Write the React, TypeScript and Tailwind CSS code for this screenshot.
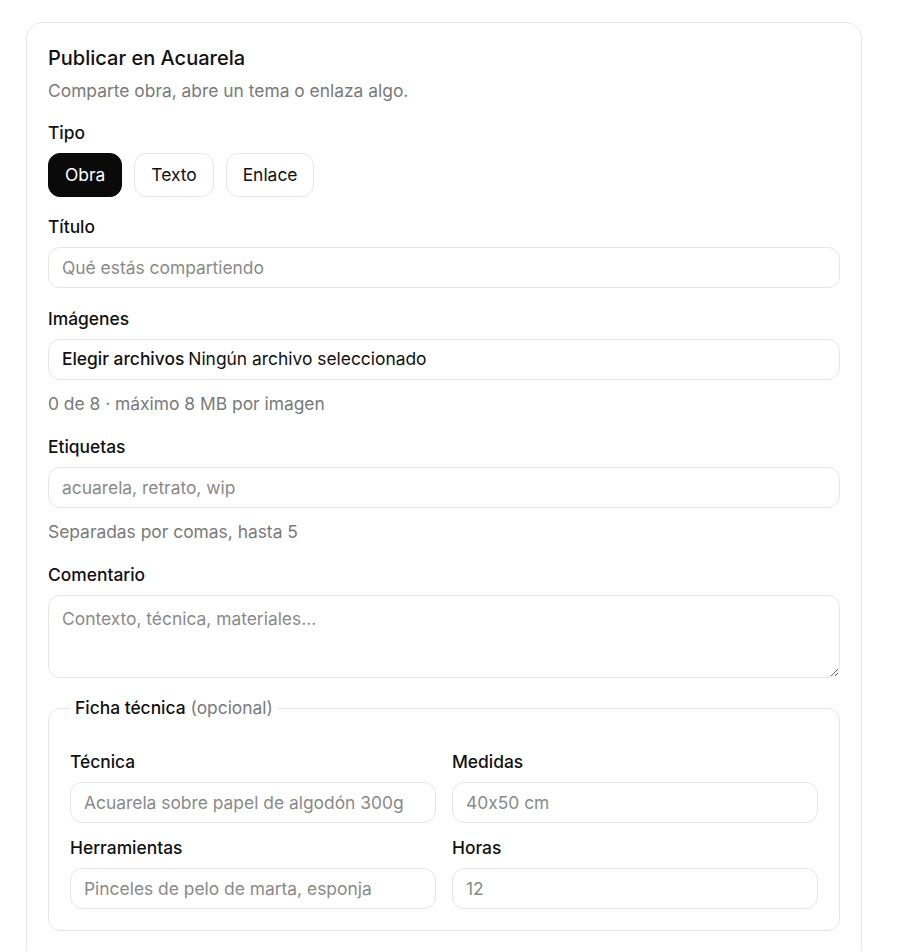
import { useState } from 'react'

function Label({ children }: { children: React.ReactNode }) {
  return <label className="block text-[17.4px] leading-6 font-medium text-[#111]">{children}</label>
}

function TextInput({ placeholder }: { placeholder: string }) {
  return (
    <input
      type="text"
      placeholder={placeholder}
      className="mt-2 block h-[41px] w-full rounded-xl border border-[#e6e6e6] bg-white px-[13px] text-[17.4px] text-[#111] outline-none placeholder:text-[#8a8a8a]"
    />
  )
}

export default function App() {
  const [tipo, setTipo] = useState('Obra')
  const tipos = ['Obra', 'Texto', 'Enlace']

  return (
    <div className="min-h-screen bg-white pt-[22px] pl-[26px] font-['Inter','Noto_Sans',sans-serif] [font-feature-settings:'calt'_0]">
      <div className="w-[836px] rounded-2xl border border-[#e8e8e8] bg-white px-[21px] pt-[21px] pb-8">
        <h1 className="text-[20px] leading-7 font-medium text-[#111]">Publicar en Acuarela</h1>
        <p className="mt-[7px] text-[17.4px] leading-6 text-[#7a7a7a]">
          Comparte obra, abre un tema o enlaza algo.
        </p>

        <div className="mt-[18px]">
          <Label>Tipo</Label>
          <div className="mt-2 flex gap-3">
            {tipos.map(t => (
              <button
                key={t}
                onClick={() => setTipo(t)}
                className={
                  t === tipo
                    ? 'h-11 rounded-xl border border-[#0a0a0a] bg-[#0a0a0a] px-4 text-[17.4px] text-white'
                    : 'h-11 rounded-xl border border-[#e6e6e6] bg-white px-4 text-[17.4px] text-[#111]'
                }
              >
                {t}
              </button>
            ))}
          </div>
        </div>

        <div className="mt-[18px]">
          <Label>Título</Label>
          <TextInput placeholder="Qué estás compartiendo" />
        </div>

        <div className="mt-[19px]">
          <Label>Imágenes</Label>
          <div className="mt-2 flex h-[41px] w-full items-center rounded-xl border border-[#e6e6e6] bg-white px-[13px] text-[17.4px] text-[#111]">
            <span className="font-medium">Elegir archivos</span>
            <span className="ml-1">Ningún archivo seleccionado</span>
          </div>
          <p className="mt-3 text-[17.4px] leading-6 text-[#7a7a7a]">0 de 8 · máximo 8 MB por imagen</p>
        </div>

        <div className="mt-[19px]">
          <Label>Etiquetas</Label>
          <TextInput placeholder="acuarela, retrato, wip" />
          <p className="mt-3 text-[17.4px] leading-6 text-[#7a7a7a]">Separadas por comas, hasta 5</p>
        </div>

        <div className="mt-[19px]">
          <Label>Comentario</Label>
          <textarea
            placeholder="Contexto, técnica, materiales..."
            className="mt-2 block h-[83px] w-full rounded-xl border border-[#e6e6e6] bg-white px-[13px] pt-[11px] text-[17.4px] leading-6 text-[#111] outline-none placeholder:text-[#8a8a8a]"
          />
        </div>

        <fieldset className="mt-[18px] rounded-xl border border-[#e6e6e6] px-[21px] pb-[21px] pt-[30px]">
          <legend className="px-[5px] text-[17.4px] leading-6 text-[#111]">
            <span className="font-medium">Ficha técnica</span>{' '}
            <span className="text-[#7a7a7a]">(opcional)</span>
          </legend>
          <div className="grid grid-cols-2 gap-x-4 gap-y-[13px]">
            <div>
              <Label>Técnica</Label>
              <TextInput placeholder="Acuarela sobre papel de algodón 300g" />
            </div>
            <div>
              <Label>Medidas</Label>
              <TextInput placeholder="40x50 cm" />
            </div>
            <div>
              <Label>Herramientas</Label>
              <TextInput placeholder="Pinceles de pelo de marta, esponja" />
            </div>
            <div>
              <Label>Horas</Label>
              <TextInput placeholder="12" />
            </div>
          </div>
        </fieldset>
      </div>
    </div>
  )
}
